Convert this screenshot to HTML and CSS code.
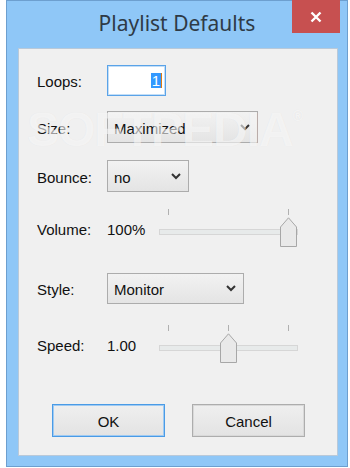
FILE: index.html
```html
<!DOCTYPE html>
<html>
	<head>
		<meta charset="utf-8">
		<title>Playlist Defaults</title>
		<link rel="stylesheet" href="styles.css">
	</head>
	<body>
		<div class="window">
			<div class="titlebar">
				<span class="title">Playlist Defaults</span>
				<div class="close">
					<svg width="12" height="12" viewBox="0 0 12 12"><path d="M1.5 1.5 L10.5 10.5 M10.5 1.5 L1.5 10.5" stroke="#fff" stroke-width="2.4"/></svg>
				</div>
			</div>
			<div class="client">
				<div class="watermark">SOFTPEDIA<sup>&reg;</sup></div>

				<div class="row row-loops">
					<span class="label">Loops:</span>
					<div class="edit"><span class="sel">1</span><span class="caret"></span></div>
				</div>

				<div class="row row-size">
					<span class="label">Size:</span>
					<div class="combo combo-size">
						<span>Maximized</span>
						<svg width="10" height="7" viewBox="0 0 10 7"><path d="M1 1 L5 5 L9 1" fill="none" stroke="#333" stroke-width="2"/></svg>
					</div>
				</div>

				<div class="row row-bounce">
					<span class="label">Bounce:</span>
					<div class="combo combo-bounce">
						<span>no</span>
						<svg width="10" height="7" viewBox="0 0 10 7"><path d="M1 1 L5 5 L9 1" fill="none" stroke="#333" stroke-width="2"/></svg>
					</div>
				</div>

				<div class="row row-volume">
					<span class="label">Volume:</span>
					<span class="value">100%</span>
					<div class="slider">
						<span class="tick" style="left: 9px"></span>
						<span class="tick" style="left: 129px"></span>
						<div class="track"></div>
						<div class="thumb" style="left: 121px">
							<svg width="17" height="30" viewBox="0 0 17 30"><path d="M0.5 29.5 L0.5 10 L8.5 0.8 L16.5 10 L16.5 29.5 Z" fill="#e9e9e9" stroke="#a7a7a7"/></svg>
						</div>
					</div>
				</div>

				<div class="row row-style">
					<span class="label">Style:</span>
					<div class="combo combo-style">
						<span>Monitor</span>
						<svg width="10" height="7" viewBox="0 0 10 7"><path d="M1 1 L5 5 L9 1" fill="none" stroke="#333" stroke-width="2"/></svg>
					</div>
				</div>

				<div class="row row-speed">
					<span class="label">Speed:</span>
					<span class="value">1.00</span>
					<div class="slider">
						<span class="tick" style="left: 9px"></span>
						<span class="tick" style="left: 69px"></span>
						<span class="tick" style="left: 129px"></span>
						<div class="track"></div>
						<div class="thumb" style="left: 61px">
							<svg width="17" height="30" viewBox="0 0 17 30"><path d="M0.5 29.5 L0.5 10 L8.5 0.8 L16.5 10 L16.5 29.5 Z" fill="#e9e9e9" stroke="#a7a7a7"/></svg>
						</div>
					</div>
				</div>

				<div class="buttons">
					<div class="btn btn-default">OK</div>
					<div class="btn">Cancel</div>
				</div>
			</div>
		</div>
	</body>
</html>
```

FILE: styles.css
```css
*{
	margin: 0;padding: 0;
	box-sizing: border-box;
}
body{
	background: #fff;
	font-family: "Liberation Sans", Arial, sans-serif;
	font-size: 15px;
	color: #111;
}
.window{
	position: relative;
	width: 342px;
	height: 467px;
	margin-left: 6px;
	background: #8fc7f7;
	border: 1px solid #6d9fcf;
}
.titlebar{
	height: 47px;
	display: flex;
	justify-content: center;
	align-items: center;
	padding-bottom: 3px;
}
.title{
	font-family: "Noto Sans", "Open Sans", sans-serif;
	font-size: 21px;
	color: #2e3a46;
}
.close{
	position: absolute;
	top: -1px;
	right: 7px;
	width: 48px;
	height: 33px;
	background: #c75050;
	display: flex;
	justify-content: center;
	align-items: center;
}
.client{
	position: relative;
	width: 320px;
	height: 408px;
	margin-left: 11px;
	background: #f0f0f0;
	border: 1px solid #b9c9d9;
	padding: 16px 0 0 18px;
	overflow: hidden;
}
.watermark{
	position: absolute;
	left: 8px;
	top: 53px;
	font-size: 48px;
	font-weight: bold;
	letter-spacing: -1px;
	color: rgba(255,255,255,0.6);
	text-shadow: 0 0 1px rgba(0,0,0,0.06);
	pointer-events: none;
	z-index: 2;
}
.watermark sup{
	font-size: 14px;
	vertical-align: top;
	position: relative;
	top: 6px;
}
.row{
	display: flex;
	align-items: center;
}
.label{
	width: 70px;
	padding-top: 2px;
}
.value{
	width: 52px;
	padding-top: 2px;
}
.row-loops{ height: 31px; }
.row-size{ height: 32px; margin-top: 15px; }
.row-bounce{ height: 32px; margin-top: 17px; }
.row-volume{ height: 44px; margin-top: 14px; }
.row-style{ height: 31px; margin-top: 23px; }
.row-speed{ height: 44px; margin-top: 18px; }

.edit{
	width: 59px;
	height: 31px;
	background: #fff;
	border: 1px solid #5aa3e8;
	box-shadow: inset 0 0 0 1px #c3def7;
	display: flex;
	justify-content: flex-end;
	align-items: center;
	padding-right: 3px;
}
.sel{
	background: #3399ff;
	color: #fff;
	height: 15px;
	line-height: 16px;
	padding: 0 1px;
}
.caret{
	width: 1px;
	height: 15px;
	background: #e07a10;
}
.combo{
	height: 100%;
	display: flex;
	justify-content: space-between;
	align-items: center;
	padding: 2px 7px 0 6px;
	background: linear-gradient(#f2f2f2, #e4e4e4);
	border: 1px solid #acacac;
}
.combo svg{
	margin-top: -2px;
}
.combo-size{ width: 151px; }
.combo-bounce{ width: 82px; }
.combo-style{ width: 137px; }

.slider{
	position: relative;
	width: 139px;
	height: 44px;
}
.tick{
	position: absolute;
	top: 3px;
	width: 1px;
	height: 6px;
	background: #b0b0b0;
}
.track{
	position: absolute;
	left: 0;
	right: 0;
	top: 23px;
	height: 6px;
	background: #e7eaea;
	border: 1px solid #d6d6d6;
}
.thumb{
	position: absolute;
	top: 11px;
	width: 17px;
	height: 30px;
}
.thumb svg{
	display: block;
}
.buttons{
	display: flex;
	gap: 27px;
	margin-top: 38px;
	padding-left: 15px;
}
.btn{
	width: 113px;
	height: 33px;
	display: flex;
	justify-content: center;
	align-items: center;
	padding-top: 2px;
	background: linear-gradient(#efefef, #e3e3e3);
	border: 1px solid #adadad;
	box-shadow: inset 0 0 0 1px #d9d9d9;
}
.btn-default{
	border-color: #4a9be6;
	box-shadow: inset 0 0 0 1px #9fcaf2;
}
```
